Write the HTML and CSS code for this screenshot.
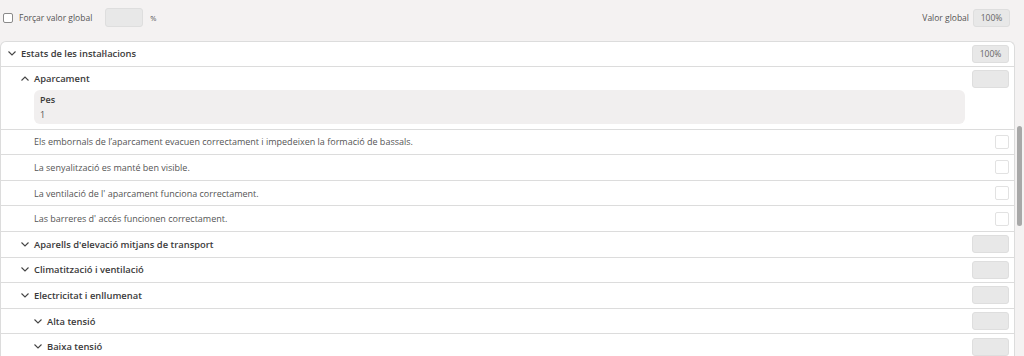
FILE: index.html
```html
<!DOCTYPE html>
<html lang="ca">
<head>
  <meta charset="UTF-8">
  <title>Estats de les instal·lacions</title>
  <link rel="stylesheet" href="styles.css">
</head>
<body>
  <div class="top-bar">
    <label class="force">
      <span class="check"></span>
      Forçar valor global
      <span class="field"></span>
      <span class="unit">%</span>
    </label>
    <div class="global">
      Valor global
      <span class="field small">100%</span>
    </div>
  </div>

  <div class="card">
    <!-- level 1 -->
    <div class="row head lvl1">
      <span class="title"><svg class="chev" viewBox="0 0 8 5"><polyline points="0.5,0.5 4,4 7.5,0.5"/></svg>Estats de les instal·lacions</span>
      <span class="field small">100%</span>
    </div>

    <!-- Aparcament (open) -->
    <div class="row group lvl2">
      <div class="group-head">
        <span class="title"><svg class="chev" viewBox="0 0 8 5"><polyline points="0.5,4.5 4,1 7.5,4.5"/></svg>Aparcament</span>
        <span class="field small"></span>
      </div>
      <div class="weight">
        <strong>Pes</strong>
        <span>1</span>
      </div>
    </div>
    <div class="row item">
      <span>Els embornals de l’aparcament evacuen correctament i impedeixen la formació de bassals.</span>
      <span class="box"></span>
    </div>
    <div class="row item">
      <span>La senyalització es manté ben visible.</span>
      <span class="box"></span>
    </div>
    <div class="row item">
      <span>La ventilació de l' aparcament funciona correctament.</span>
      <span class="box"></span>
    </div>
    <div class="row item">
      <span>Las barreres d' accés funcionen correctament.</span>
      <span class="box"></span>
    </div>

    <div class="row head lvl2">
      <span class="title"><svg class="chev" viewBox="0 0 8 5"><polyline points="0.5,0.5 4,4 7.5,0.5"/></svg>Aparells d'elevació mitjans de transport</span>
      <span class="field small"></span>
    </div>
    <div class="row head lvl2">
      <span class="title"><svg class="chev" viewBox="0 0 8 5"><polyline points="0.5,0.5 4,4 7.5,0.5"/></svg>Climatització i ventilació</span>
      <span class="field small"></span>
    </div>
    <div class="row head lvl2">
      <span class="title"><svg class="chev" viewBox="0 0 8 5"><polyline points="0.5,0.5 4,4 7.5,0.5"/></svg>Electricitat i enllumenat</span>
      <span class="field small"></span>
    </div>
    <div class="row head lvl3">
      <span class="title"><svg class="chev" viewBox="0 0 8 5"><polyline points="0.5,0.5 4,4 7.5,0.5"/></svg>Alta tensió</span>
      <span class="field small"></span>
    </div>
    <div class="row head lvl3">
      <span class="title"><svg class="chev" viewBox="0 0 8 5"><polyline points="0.5,0.5 4,4 7.5,0.5"/></svg>Baixa tensió</span>
      <span class="field small"></span>
    </div>
  </div>

  <div class="scroll-thumb"></div>
</body>
</html>
```

FILE: styles.css
```css
* {
  margin: 0;
  padding: 0;
  box-sizing: border-box;
}

body {
  font-family: 'Open Sans', 'Noto Sans', sans-serif;
  font-size: 9px;
  color: #555;
  background-color: #f4f2f2;
  height: 356px;
  overflow: hidden;
}

/* Top bar */
.top-bar {
  display: flex;
  align-items: center;
  justify-content: space-between;
  height: 35px;
  padding: 0 14px 0 3px;
  font-size: 8.5px;
}

.force {
  display: flex;
  align-items: center;
}

.check {
  width: 10px;
  height: 10px;
  border: 1px solid #8a8a8a;
  border-radius: 2px;
  background-color: #fff;
  margin-right: 6px;
}

.field {
  display: inline-block;
  width: 38px;
  height: 19px;
  line-height: 17px;
  text-align: center;
  font-size: 8.5px;
  font-weight: 400;
  color: #666;
  background-color: #e8e8e8;
  border: 1px solid #dedede;
  border-radius: 3px;
}

.force .field {
  margin-left: 13px;
}

.unit {
  margin-left: 7px;
  font-size: 7.5px;
}

.global {
  display: flex;
  align-items: center;
  gap: 4px;
}

.field.small {
  width: 37px;
  height: 18px;
  line-height: 16px;
}

/* Card */
.card {
  margin-top: 6px;
  margin-right: 9px;
  background-color: #fff;
  border: 1px solid #dcdcdc;
  border-bottom: none;
  border-radius: 6px 6px 0 0;
}

.row {
  display: flex;
  align-items: center;
  justify-content: space-between;
  height: 25.6px;
  padding-right: 5px;
  border-bottom: 1px solid #dcdcdc;
}

.title {
  display: flex;
  align-items: center;
  font-size: 9.4px;
  font-weight: 600;
  color: #3a3a3a;
}

.chev {
  width: 8px;
  height: 5px;
  margin-right: 5px;
  fill: none;
  stroke: #444;
  stroke-width: 1.1;
}

.lvl1 { padding-left: 7px; height: 24.6px; }
.lvl2 { padding-left: 20px; }
.lvl3 { padding-left: 33px; }

.group {
  display: block;
  height: 63px;
  padding-right: 5px;
}

.group-head {
  display: flex;
  align-items: center;
  justify-content: space-between;
  height: 23px;
  padding-top: 1px;
}

.weight {
  display: flex;
  flex-direction: column;
  justify-content: center;
  gap: 2px;
  margin: 0 44px 0 13px;
  height: 34px;
  padding-left: 6px;
  background-color: #f1efef;
  border-radius: 6px;
}

.weight strong {
  font-weight: 600;
  color: #3a3a3a;
}

.item {
  padding-left: 33px;
}

.box {
  width: 14px;
  height: 14px;
  border: 1px solid #e2e2e2;
  border-radius: 2px;
}

/* fake scrollbar thumb */
.scroll-thumb {
  position: absolute;
  top: 126px;
  right: 2px;
  width: 5px;
  height: 100px;
  background-color: #a8a8a8;
  border-radius: 3px;
}
```
